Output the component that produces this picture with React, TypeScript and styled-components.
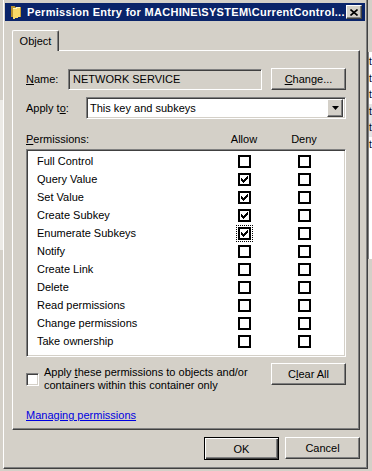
import React from 'react';
import styled, { createGlobalStyle, css } from 'styled-components';

const GlobalStyle = createGlobalStyle`
  html, body {
    margin: 0;
    padding: 0;
    width: 372px;
    height: 471px;
    overflow: hidden;
    background: #d4d0c8;
  }
  body {
    font-family: "Liberation Sans", Arial, sans-serif;
    font-size: 11px;
    color: #000;
  }
`;

const raised = css`
  border: 1px solid;
  border-color: #ffffff #404040 #404040 #ffffff;
  box-shadow: inset -1px -1px 0 #808080;
`;

const sunken = css`
  border: 1px solid;
  border-color: #808080 #ffffff #ffffff #808080;
  box-shadow: inset 1px 1px 0 #404040, inset -1px -1px 0 #d4d0c8;
`;

const Screen = styled.div`
  display: flex;
  height: 471px;
`;

const BackLeft = styled.div`
  width: 3px;
  background: linear-gradient(#d4d0c8 0, #d4d0c8 100px, #eceae6 100px, #eceae6 250px, #d4d0c8 250px);
`;

const BackRight = styled.div`
  flex: 1;
  display: flex;
  flex-direction: column;
  overflow: hidden;
  background: #d4d0c8;
`;

const PaneList = styled.div`
  margin-top: 52px;
  height: 205px;
  background: #fff;
  border-left: 1px solid #808080;
  padding-top: 2px;
  font-size: 10px;
  white-space: nowrap;
`;

const PaneRow = styled.div<{ $shade?: boolean }>`
  height: 16.5px;
  line-height: 16px;
  background: ${(p) => (p.$shade ? '#e4e4e4' : 'transparent')};
`;

const Window = styled.div`
  width: 365px;
  height: 469px;
  box-sizing: border-box;
  border-left: 1px solid #ffffff;
  border-right: 1px solid #404040;
  border-bottom: 1px solid #404040;
  box-shadow: inset -1px -1px 0 #808080;
  padding: 3px 2px 0 1px;
  display: flex;
  flex-direction: column;
  background: #d4d0c8;
`;

const TitleBar = styled.div`
  height: 18px;
  background: #0a246a;
  display: flex;
  align-items: center;
  padding: 0 3px 0 5px;
  color: #fff;
  font-weight: bold;
  font-size: 11px;
`;

const TitleText = styled.span`
  flex: 1;
  margin-left: 6px;
  letter-spacing: 0.3px;
  white-space: nowrap;
  overflow: hidden;
`;

const CloseButton = styled.div`
  width: 16px;
  height: 14px;
  box-sizing: border-box;
  background: #d4d0c8;
  ${raised};
  display: flex;
  align-items: center;
  justify-content: center;
`;

const Body = styled.div`
  display: flex;
  flex-direction: column;
  padding: 9px 5px 0 7px;
`;

const TabStrip = styled.div`
  display: flex;
  height: 20px;
`;

const Tab = styled.div`
  position: relative;
  z-index: 1;
  width: 47px;
  height: 21px;
  box-sizing: border-box;
  background: #d4d0c8;
  border-top: 1px solid #fff;
  border-left: 1px solid #fff;
  border-right: 1px solid #404040;
  box-shadow: inset -1px 0 0 #808080;
  border-radius: 2px 2px 0 0;
  display: flex;
  align-items: center;
  justify-content: center;
  padding-bottom: 1px;
`;

const TabPanel = styled.div`
  width: 348px;
  height: 380px;
  box-sizing: border-box;
  border-top: 1px solid #fff;
  border-left: 1px solid #fff;
  border-right: 1px solid #404040;
  border-bottom: 1px solid #404040;
  box-shadow: inset -1px -1px 0 #808080;
  padding: 17px 13px 0 13px;
  display: flex;
  flex-direction: column;
`;

const FieldRow = styled.div<{ $gap?: number }>`
  display: flex;
  align-items: center;
  height: 22px;
  margin-top: ${(p) => p.$gap ?? 0}px;
`;

const Label = styled.span<{ $w: number }>`
  width: ${(p) => p.$w}px;
  flex-shrink: 0;
`;

const ReadOnlyBox = styled.div`
  width: 194px;
  height: 21px;
  box-sizing: border-box;
  ${sunken};
  background: #d4d0c8;
  padding-left: 4px;
  display: flex;
  align-items: center;
`;

const Button = styled.div<{ $default?: boolean; $push?: boolean }>`
  width: 75px;
  height: ${(p) => (p.$default ? 23 : 22)}px;
  box-sizing: border-box;
  margin-left: ${(p) => (p.$push ? 'auto' : '0')};
  background: #d4d0c8;
  display: flex;
  align-items: center;
  justify-content: center;
  ${(p) =>
    p.$default
      ? css`
          border: 1px solid #000;
          box-shadow: inset 1px 1px 0 #fff, inset -1px -1px 0 #404040, inset -2px -2px 0 #808080;
        `
      : raised};
`;

const Combo = styled.div`
  width: 260px;
  height: 22px;
  box-sizing: border-box;
  ${sunken};
  background: #fff;
  display: flex;
  align-items: center;
  padding: 2px 2px 2px 3px;
`;

const ComboText = styled.span`
  flex: 1;
`;

const ArrowButton = styled.div`
  width: 16px;
  height: 18px;
  box-sizing: border-box;
  background: #d4d0c8;
  ${raised};
  display: flex;
  align-items: center;
  justify-content: center;
`;

const PermHeader = styled.div`
  margin-top: 13px;
  height: 14px;
  line-height: 14px;
  display: grid;
  grid-template-columns: 1fr 60px 60px;
  padding-right: 12px;
  margin-bottom: 3px;
`;

const ColHead = styled.span`
  text-align: center;
`;

const PermList = styled.div`
  height: 208px;
  box-sizing: border-box;
  ${sunken};
  background: #fff;
  padding: 2px 11px 0 10px;
`;

const PermRow = styled.div`
  height: 18px;
  display: grid;
  grid-template-columns: 1fr 60px 60px;
  align-items: center;
`;

const Cell = styled.div`
  display: flex;
  justify-content: center;
`;

const FlatCheck = styled.div<{ $focus?: boolean }>`
  width: 13px;
  height: 13px;
  box-sizing: border-box;
  border: 2px solid #000;
  background: #fff;
  display: flex;
  align-items: center;
  justify-content: center;
  outline: ${(p) => (p.$focus ? '1px dotted #000' : 'none')};
  outline-offset: 1px;
`;

const ApplyRow = styled.div`
  margin-top: 6px;
  display: flex;
  align-items: flex-start;
`;

const ApplyLabel = styled.div`
  margin-top: 3px;
  display: flex;
  align-items: center;
  gap: 5px;
`;

const Check3D = styled.div`
  width: 13px;
  height: 13px;
  box-sizing: border-box;
  ${sunken};
  background: #fff;
  flex-shrink: 0;
`;

const ApplyText = styled.div`
  line-height: 13px;
`;

const HelpLink = styled.a`
  margin-top: 17px;
  align-self: flex-start;
  line-height: 13px;
  color: #0000e0;
  text-decoration: underline;
  cursor: pointer;
`;

const Footer = styled.div`
  margin-top: 7px;
  display: flex;
  justify-content: flex-end;
  gap: 6px;
`;

const FolderIcon = () => (
  <svg width="11" height="14" viewBox="0 0 11 14" shapeRendering="crispEdges">
    <path d="M1 1 H5 V2 H9 V12 H1 Z" fill="#b8922e" />
    <path d="M3 4 L10 2 V12 L3 14 Z" fill="#f8d868" />
    <path d="M3 4 L10 2" stroke="#fff6c0" strokeWidth="1" />
    <path d="M10 2 V12" stroke="#c89c30" strokeWidth="1" />
  </svg>
);

const CloseGlyph = () => (
  <svg width="8" height="7" viewBox="0 0 8 7">
    <path d="M0.5 0.5 L7.5 6.5 M7.5 0.5 L0.5 6.5" stroke="#000" strokeWidth="1.6" />
  </svg>
);

const DownArrow = () => (
  <svg width="7" height="4" viewBox="0 0 7 4">
    <path d="M0 0 H7 L3.5 4 Z" fill="#000" />
  </svg>
);

const Tick = () => (
  <svg width="7" height="7" viewBox="0 0 7 7" shapeRendering="crispEdges">
    <path d="M0 2 L2 4 L6 0 L7 0 L7 2 L2 7 L0 5 Z" fill="#000" />
  </svg>
);

type Perm = { name: string; allow: boolean; focus?: boolean };

const perms: Perm[] = [
  { name: 'Full Control', allow: false },
  { name: 'Query Value', allow: true },
  { name: 'Set Value', allow: true },
  { name: 'Create Subkey', allow: true },
  { name: 'Enumerate Subkeys', allow: true, focus: true },
  { name: 'Notify', allow: false },
  { name: 'Create Link', allow: false },
  { name: 'Delete', allow: false },
  { name: 'Read permissions', allow: false },
  { name: 'Change permissions', allow: false },
  { name: 'Take ownership', allow: false },
];

const App: React.FC = () => {
  return (
    <>
      <GlobalStyle />
      <Screen>
        <BackLeft />
        <Window>
          <TitleBar>
            <FolderIcon />
            <TitleText>{'Permission Entry for MACHINE\\SYSTEM\\CurrentControl...'}</TitleText>
            <CloseButton>
              <CloseGlyph />
            </CloseButton>
          </TitleBar>
          <Body>
            <TabStrip>
              <Tab>Object</Tab>
            </TabStrip>
            <TabPanel>
              <FieldRow>
                <Label $w={42}>
                  <u>N</u>ame:
                </Label>
                <ReadOnlyBox>NETWORK SERVICE</ReadOnlyBox>
                <Button $push>
                  <u>C</u>hange...
                </Button>
              </FieldRow>
              <FieldRow $gap={7}>
                <Label $w={60}>
                  Apply t<u>o</u>:
                </Label>
                <Combo>
                  <ComboText>This key and subkeys</ComboText>
                  <ArrowButton>
                    <DownArrow />
                  </ArrowButton>
                </Combo>
              </FieldRow>
              <PermHeader>
                <span>
                  <u>P</u>ermissions:
                </span>
                <ColHead>Allow</ColHead>
                <ColHead>Deny</ColHead>
              </PermHeader>
              <PermList>
                {perms.map((p) => (
                  <PermRow key={p.name}>
                    <span>{p.name}</span>
                    <Cell>
                      <FlatCheck $focus={p.focus}>{p.allow && <Tick />}</FlatCheck>
                    </Cell>
                    <Cell>
                      <FlatCheck />
                    </Cell>
                  </PermRow>
                ))}
              </PermList>
              <ApplyRow>
                <ApplyLabel>
                  <Check3D />
                  <ApplyText>
                    Apply <u>t</u>hese permissions to objects and/or
                    <br />
                    containers within this container only
                  </ApplyText>
                </ApplyLabel>
                <Button $push>
                  C<u>l</u>ear All
                </Button>
              </ApplyRow>
              <HelpLink>Managing permissions</HelpLink>
            </TabPanel>
            <Footer>
              <Button $default>OK</Button>
              <Button>Cancel</Button>
            </Footer>
          </Body>
        </Window>
        <BackRight>
          <PaneList>
            <PaneRow>t</PaneRow>
            <PaneRow>t</PaneRow>
            <PaneRow>t</PaneRow>
            <PaneRow $shade>t</PaneRow>
            <PaneRow $shade>t</PaneRow>
            <PaneRow>t</PaneRow>
          </PaneList>
        </BackRight>
      </Screen>
    </>
  );
};

export default App;
